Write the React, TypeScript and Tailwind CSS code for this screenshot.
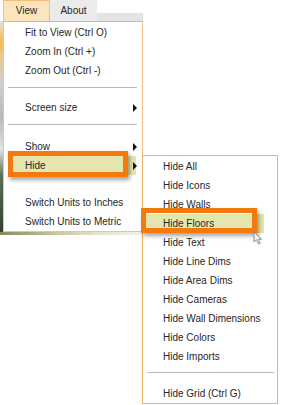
import React from "react";

type Entry = { label: string; arrow?: boolean; hot?: boolean } | "sep" | "gap";

const mainItems: Entry[] = [
    { label: "Fit to View (Ctrl O)" },
    { label: "Zoom In (Ctrl +)" },
    { label: "Zoom Out (Ctrl -)" },
    "sep",
    { label: "Screen size", arrow: true },
    "sep",
    { label: "Show", arrow: true },
    { label: "Hide", arrow: true, hot: true },
    "gap",
    { label: "Switch Units to Inches" },
    { label: "Switch Units to Metric" },
];

const hideItems: Entry[] = [
    { label: "Hide All" },
    { label: "Hide Icons" },
    { label: "Hide Walls" },
    { label: "Hide Floors", hot: true },
    { label: "Hide Text" },
    { label: "Hide Line Dims" },
    { label: "Hide Area Dims" },
    { label: "Hide Cameras" },
    { label: "Hide Wall Dimensions" },
    { label: "Hide Colors" },
    { label: "Hide Imports" },
    "sep",
    { label: "Hide Grid (Ctrl G)" },
];

function Arrow() {
    return (
        <span className="absolute right-[5px] top-[6px] w-0 h-0 border-y-[4px] border-y-transparent border-l-[4px] border-l-[#111]" />
    );
}

function MainMenu() {
    let sepCount = 0;
    return (
        <div className="absolute left-[3px] top-[21px] w-[140px] bg-white border border-[#f2c286] border-t-[#efb366] pt-[1px] pb-[0px]">
            {mainItems.map((it, i) => {
                if (it === "sep") {
                    sepCount++;
                    return (
                        <div key={i} className={sepCount === 1 ? "h-[18px] pt-[7px]" : "h-[20px] pt-[7px]"}>
                            <div className="ml-[4px] mr-[5px] h-px bg-[#b9b9b9]" />
                        </div>
                    );
                }
                if (it === "gap") return <div key={i} className="h-[18px]" />;
                return (
                    <div key={i} className="relative h-[19px] flex items-center pl-[21px]">
                        {it.hot && (
                            <>
                                <div className="absolute left-[4px] right-[6px] top-0 bottom-0 bg-[#e4e6ad]" />
                                <div className="absolute left-[4px] w-[120px] top-[-5px] h-[26px] border-[5px] border-[#f47a0e] shadow-[2px_3px_4px_rgba(0,0,0,0.35)]" />
                            </>
                        )}
                        <span className="relative">{it.label}</span>
                        {it.arrow && <Arrow />}
                    </div>
                );
            })}
        </div>
    );
}

function HideMenu() {
    return (
        <div className="absolute left-[142px] top-[155px] w-[136px] bg-white border border-[#edb25f] pt-[1px]">
            {hideItems.map((it, i) => {
                if (it === "sep") {
                    return (
                        <div key={i} className="h-[18px] pt-[6px]">
                            <div className="ml-[4px] mr-[3px] h-px bg-[#b9b9b9]" />
                        </div>
                    );
                }
                if (it === "gap") return null;
                return (
                    <div key={i} className="relative h-[19px] flex items-center pl-[20px]">
                        {it.hot && (
                            <>
                                <div className="absolute left-[3px] w-[118px] top-0 bottom-0 bg-[#e4e6ad]" />
                                <div className="absolute left-[-2px] w-[116px] top-[-6px] h-[25px] border-[5px] border-[#f47a0e] shadow-[2px_3px_4px_rgba(0,0,0,0.35)]" />
                            </>
                        )}
                        <span className="relative">{it.label}</span>
                    </div>
                );
            })}
        </div>
    );
}

export default function App() {
    return (
        <div className="relative w-[283px] h-[405px] bg-white overflow-hidden text-[10px] leading-none text-[#262626] font-['Liberation_Sans',Arial,sans-serif]">
            <div className="flex h-[21px]">
                <div className="w-[3px]" />
                <div className="w-[47px] h-[21px] flex items-center justify-center bg-[#fce5bd] border border-[#f2bf78] border-b-0">
                    View
                </div>
                <div className="w-[47px] h-[21px] flex items-center justify-center bg-[#ebebeb]">
                    About
                </div>
                <div className="w-[46px] self-end h-[8px] bg-[#e4e4e4]" />
            </div>

            {/* bits of the drawing behind the menus */}
            <div className="absolute left-0 top-[21px] w-[3px] h-[214px] bg-[linear-gradient(to_bottom,#e6e2d6_0%,#f4b85a_10%,#e8c890_16%,#cfcfcf_30%,#b8b8b8_45%,#e2e2e2_60%,#5d6f55_72%,#30402e_100%)]" />
            <div className="absolute left-0 top-[232px] w-[142px] h-[3px] bg-[linear-gradient(to_right,#8a8a5a,#c9c6a2_40%,#e6e2cc_70%,#f4f2ea)]" />

            <MainMenu />
            <HideMenu />

            <svg className="absolute left-[253px] top-[231px]" width="11" height="14" viewBox="0 0 11 14">
                <path d="M1 1 L1 11 L3.5 8.8 L5.5 13 L7.2 12.2 L5.3 8.2 L8.6 8.2 Z" fill="#f4f4f4" stroke="#8a8a8a" strokeWidth="1" strokeLinejoin="round" />
            </svg>
        </div>
    );
}
